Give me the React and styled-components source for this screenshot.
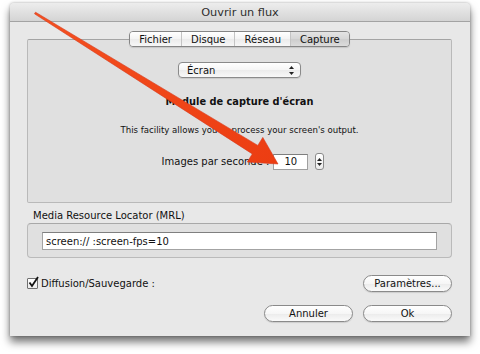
import React from "react";
import styled, { createGlobalStyle } from "styled-components";

const GlobalStyle = createGlobalStyle`
  html, body { margin: 0; padding: 0; background: #ffffff; }
  body { font-family: "DejaVu Sans", "Liberation Sans", sans-serif; color: #111; }
  * { box-sizing: border-box; }
`;

const Stage = styled.div`
  position: relative;
  width: 480px;
  height: 354px;
  padding: 3px 10px 0;
  overflow: hidden;
`;

const Window = styled.div`
  width: 460px;
  height: 333px;
  background: #e8e8e8;
  display: flex;
  flex-direction: column;
  border-radius: 4px 4px 0 0;
  box-shadow: 0 6px 9px rgba(0, 0, 0, 0.55), 0 0 3px rgba(0, 0, 0, 0.3);
`;

const TitleBar = styled.div`
  flex: none;
  height: 19px;
  display: flex;
  align-items: center;
  justify-content: center;
  background: linear-gradient(#ededed, #d4d4d4);
  border-bottom: 1px solid #a3a3a3;
  border-radius: 4px 4px 0 0;
  font-size: 11.3px;
  color: #2e2e2e;
`;

const Content = styled.div`
  flex: 1;
  display: flex;
  flex-direction: column;
  padding: 17px 18px 0 17px;
`;

const TabBox = styled.div`
  height: 164px;
  display: flex;
  flex-direction: column;
  align-items: center;
  background: #e0e0e0;
  border: 1px solid #b9b9b9;
  border-top-color: #a4a4a4;
  border-radius: 2px;
`;

const Tabs = styled.div`
  margin-top: -9px;
  height: 16px;
  display: flex;
  border: 1px solid #858585;
  border-radius: 4px;
  overflow: hidden;
  box-shadow: 0 1px 1px rgba(0, 0, 0, 0.12);
`;

const Tab = styled.div`
  padding: 0 9px;
  display: flex;
  align-items: center;
  font-size: 10px;
  color: #111;
  background: ${(p) =>
    p.$active
      ? "linear-gradient(#e4e4e4, #d6d6d6 50%, #cdcdcd 51%, #dcdcdc)"
      : "linear-gradient(#ffffff, #f4f4f4 50%, #ebebeb 51%, #f7f7f7)"};
  & + & { border-left: 1px solid #c4c4c4; }
`;

const Popup = styled.div`
  margin-top: 15px;
  width: 123px;
  height: 16px;
  display: flex;
  align-items: center;
  justify-content: space-between;
  padding: 0 6px 0 8px;
  background: linear-gradient(#ffffff, #f5f5f5 50%, #ebebeb 51%, #f8f8f8);
  border: 1px solid #8a8a8a;
  border-radius: 4px;
  font-size: 10px;
  box-shadow: 0 1px 1px rgba(0, 0, 0, 0.1);
`;

const Heading = styled.div`
  margin-top: 17px;
  font-size: 9.8px;
  font-weight: bold;
  line-height: 14px;
`;

const Description = styled.div`
  margin-top: 15px;
  font-size: 8.6px;
  line-height: 12px;
`;

const FpsRow = styled.div`
  margin-top: 17px;
  padding-left: 7px;
  height: 17px;
  display: flex;
  align-items: center;
`;

const Label = styled.span`
  font-size: 10px;
  line-height: 12px;
`;

const NumberField = styled.div`
  margin-left: 4px;
  width: 35px;
  height: 16px;
  display: flex;
  align-items: center;
  padding-left: 10px;
  background: #ffffff;
  border: 1px solid #a0a0a0;
  border-top-color: #7e7e7e;
  font-size: 10px;
`;

const Stepper = styled.div`
  margin-left: 7px;
  width: 9px;
  height: 17px;
  display: flex;
  flex-direction: column;
  align-items: center;
  justify-content: center;
  gap: 2px;
  background: linear-gradient(#ffffff, #ececec);
  border: 1px solid #8a8a8a;
  border-radius: 3px;
`;

const MrlLabel = styled.div`
  margin: 7px 0 1px 6px;
  font-size: 10px;
  line-height: 12px;
`;

const MrlBox = styled.div`
  height: 35px;
  padding: 8px 14px 8px 14px;
  background: #e0e0e0;
  border: 1px solid #bababa;
  border-top-color: #a8a8a8;
  border-radius: 4px;
`;

const MrlInput = styled.div`
  height: 18px;
  display: flex;
  align-items: center;
  padding-left: 3px;
  background: #ffffff;
  border: 1px solid #a3a3a3;
  border-top-color: #7f7f7f;
  font-size: 10px;
`;

const OptionsRow = styled.div`
  margin-top: 17px;
  height: 17px;
  display: flex;
  align-items: center;
  justify-content: space-between;
`;

const CheckLabel = styled.div`
  display: flex;
  align-items: center;
  gap: 3px;
  font-size: 10px;
`;

const CheckBox = styled.div`
  position: relative;
  width: 11px;
  height: 11px;
  background: linear-gradient(#ffffff, #ececec);
  border: 1px solid #6f6f6f;
  border-radius: 1px;
`;

const ButtonRow = styled.div`
  margin-top: 13px;
  display: flex;
  justify-content: flex-end;
  gap: 10px;
`;

const Button = styled.div`
  width: 89px;
  height: 17px;
  display: flex;
  align-items: center;
  justify-content: center;
  font-size: 10px;
  color: #111;
  background: linear-gradient(#ffffff, #f6f6f6 50%, #ebebeb 51%, #fafafa);
  border: 1px solid #8a8a8a;
  border-radius: 9px;
  box-shadow: 0 1px 1px rgba(0, 0, 0, 0.12);
`;

const Overlay = styled.svg`
  position: absolute;
  left: 0;
  top: 0;
  pointer-events: none;
`;

const UpDown = () => (
  <svg width="5" height="9" viewBox="0 0 5 9">
    <path d="M2.5 0 L5 3 L0 3 Z" fill="#222" />
    <path d="M2.5 9 L5 6 L0 6 Z" fill="#222" />
  </svg>
);

const Tri = ({ up }) => (
  <svg width="5" height="3" viewBox="0 0 5 3">
    <path d={up ? "M2.5 0 L5 3 L0 3 Z" : "M0 0 L5 0 L2.5 3 Z"} fill="#222" />
  </svg>
);

const Arrow = () => (
  <Overlay width="480" height="354" viewBox="0 0 480 354">
    <defs>
      <linearGradient id="ag" x1="0" y1="0" x2="1" y2="1">
        <stop offset="0" stopColor="#f4501f" />
        <stop offset="1" stopColor="#ec3d12" />
      </linearGradient>
    </defs>
    <polygon
      points="34.5,13.8 35.5,12.2 257.8,145.4 262.8,137.4 278,164 247.3,162.0 252.3,153.9"
      fill="url(#ag)"
      stroke="#d7361a"
      strokeWidth="0.6"
      strokeLinejoin="round"
    />
  </Overlay>
);

export default function App() {
  return (
    <Stage>
      <GlobalStyle />
      <Window>
        <TitleBar>Ouvrir un flux</TitleBar>
        <Content>
          <TabBox>
            <Tabs>
              <Tab>Fichier</Tab>
              <Tab>Disque</Tab>
              <Tab>Réseau</Tab>
              <Tab $active>Capture</Tab>
            </Tabs>
            <Popup>
              <span>Écran</span>
              <UpDown />
            </Popup>
            <Heading>Module de capture d'écran</Heading>
            <Description>This facility allows you to process your screen's output.</Description>
            <FpsRow>
              <Label>Images par seconde :</Label>
              <NumberField>10</NumberField>
              <Stepper>
                <Tri up />
                <Tri />
              </Stepper>
            </FpsRow>
          </TabBox>
          <MrlLabel>Media Resource Locator (MRL)</MrlLabel>
          <MrlBox>
            <MrlInput>screen:// :screen-fps=10</MrlInput>
          </MrlBox>
          <OptionsRow>
            <CheckLabel>
              <CheckBox>
                <svg width="13" height="13" viewBox="0 0 13 13" style={{ position: "absolute", left: -1, top: -3 }}>
                  <path d="M2.5 6.5 L5 10 L11 1" fill="none" stroke="#111" strokeWidth="1.8" />
                </svg>
              </CheckBox>
              <span>Diffusion/Sauvegarde :</span>
            </CheckLabel>
            <Button>Paramètres...</Button>
          </OptionsRow>
          <ButtonRow>
            <Button>Annuler</Button>
            <Button>Ok</Button>
          </ButtonRow>
        </Content>
      </Window>
      <Arrow />
    </Stage>
  );
}
